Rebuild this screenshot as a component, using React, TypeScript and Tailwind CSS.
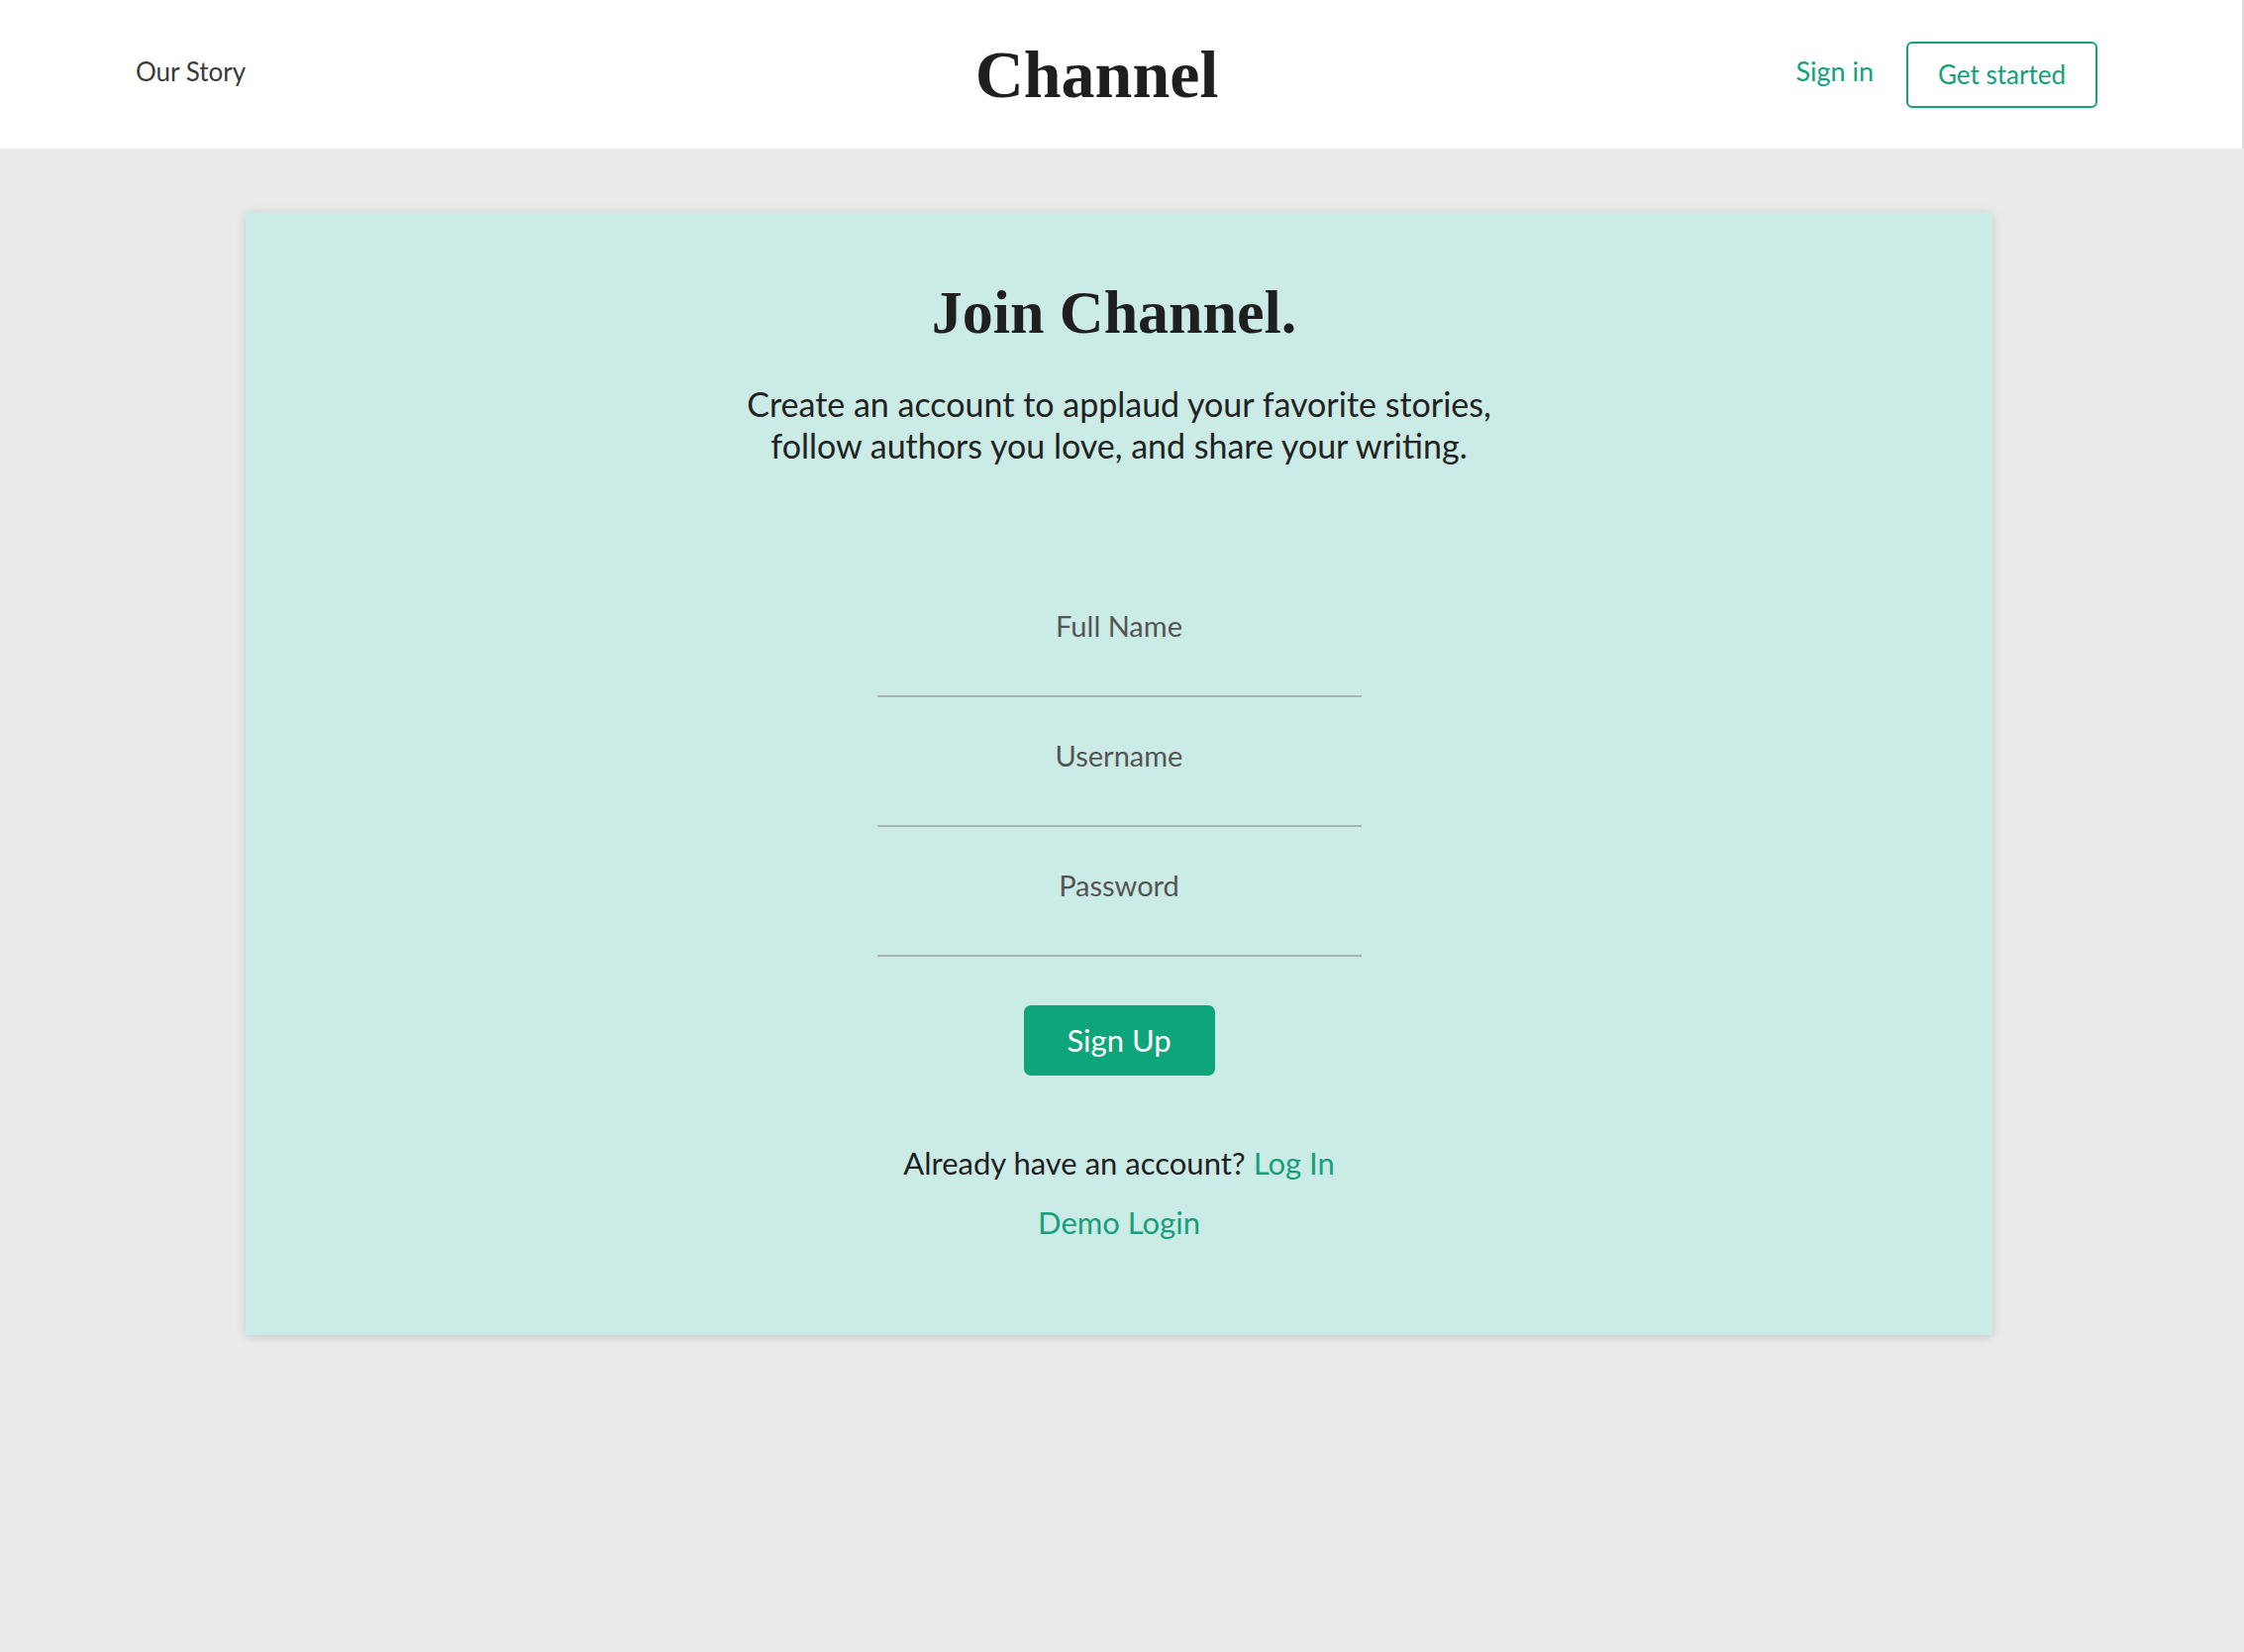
import React from "react";

const sans = { fontFamily: '"Lato", "Open Sans", sans-serif' };
const serif = { fontFamily: '"Liberation Serif", "DejaVu Serif", serif' };

export default function App() {
  return (
    <div className="min-h-[1668px] w-full bg-[#ebebeb]" style={sans}>
      <header className="h-[150px] bg-white border-r-2 border-[#dcdcdc] grid grid-cols-[1fr_auto_1fr] items-center pl-[137px] pr-[146px]">
        <div className="pb-[6px] text-[26px] text-[#3a3a3a]">Our Story</div>
        <div className="mr-[40px] text-[68px] font-bold text-[#1f1f1f] leading-none" style={serif}>
          Channel
        </div>
        <div className="flex items-center justify-end gap-[33px]">
          <a className="pb-[6px] text-[27px] text-[#14a07a] cursor-pointer">Sign in</a>
          <button className="w-[193px] h-[67px] rounded-[6px] border-2 border-[#14a07a] text-[26px] text-[#14a07a] bg-white">
            Get started
          </button>
        </div>
      </header>

      <main className="pt-[64px]">
        <div className="ml-[248px] w-[1764px] bg-[#cbece6] shadow-[0_2px_10px_rgba(0,0,0,0.16)] pt-[61px] pb-[92px] flex flex-col items-center">
          <h1 className="mr-[10px] text-[62px] font-bold leading-[80px] text-[#1f1f1f]" style={serif}>
            Join Channel.
          </h1>
          <p className="mt-[32px] text-center text-[34px] leading-[42px] text-[#222]">
            Create an account to applaud your favorite stories,
            <br />
            follow authors you love, and share your writing.
          </p>

          <form className="mt-[102px] w-[489px] flex flex-col items-center" onSubmit={(e) => e.preventDefault()}>
            {["Full Name", "Username", "Password"].map((p) => (
              <input
                key={p}
                type={p === "Password" ? "password" : "text"}
                placeholder={p}
                className="block w-full bg-transparent text-center border-b-2 border-[#a9b3b1] pt-[40px] pb-[51px] text-[29px] leading-[38px] text-[#333] outline-none placeholder:text-[#555]"
              />
            ))}
            <button
              type="submit"
              className="mt-[49px] w-[193px] h-[71px] rounded-[7px] bg-[#0ea57b] text-white text-[31px]"
            >
              Sign Up
            </button>
          </form>

          <div className="mt-[66px] text-[31px] leading-[44px] text-[#1f1f1f]">
            Already have an account? <a className="text-[#17a07a] cursor-pointer">Log In</a>
          </div>
          <a className="mt-[16px] text-[31px] leading-[44px] text-[#17a07a] cursor-pointer">Demo Login</a>
        </div>
      </main>
    </div>
  );
}
